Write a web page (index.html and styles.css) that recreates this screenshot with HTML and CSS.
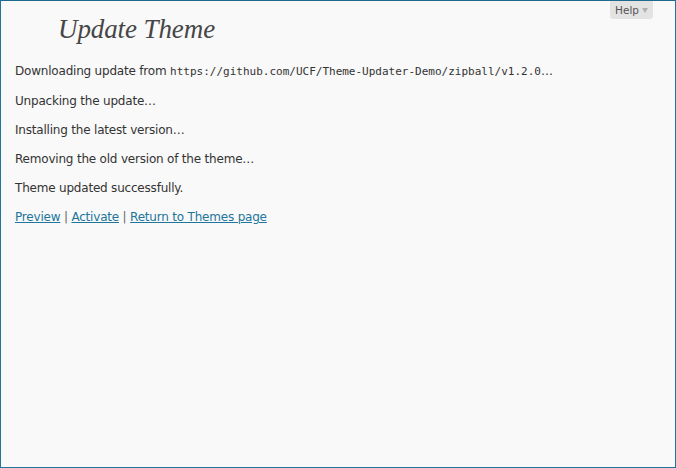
FILE: index.html
```html
<!DOCTYPE html>
<html>
<head>
<meta charset="utf-8">
<link rel="stylesheet" href="styles.css">
</head>
<body>
<div class="frame">
  <div class="help-bar"><button class="help-tab">Help <span class="arrow"></span></button></div>
  <div class="wrap">
    <h2 class="title">Update Theme</h2>
    <p>Downloading update from <code>https://github.com/UCF/Theme-Updater-Demo/zipball/v1.2.0</code>&hellip;</p>
    <p>Unpacking the update&hellip;</p>
    <p>Installing the latest version&hellip;</p>
    <p>Removing the old version of the theme&hellip;</p>
    <p>Theme updated successfully.</p>
    <p class="actions"><a href="#">Preview</a> <span class="sep">|</span> <a href="#">Activate</a> <span class="sep">|</span> <a href="#">Return to Themes page</a></p>
  </div>
</div>
</body>
</html>
```
FILE: styles.css
```css
html, body {
  margin: 0;
  padding: 0;
  height: 100%;
}
body {
  background: #f9f9f9;
  font-family: "DejaVu Sans", Verdana, sans-serif;
  font-size: 12px;
  letter-spacing: -0.2px;
  color: #333;
}
.frame {
  box-sizing: border-box;
  height: 468px;
  border: 1px solid #21759b;
  border-top-color: #1d6a8c;
  background: #f9f9f9;
  position: relative;
}
.help-bar {
  position: absolute;
  top: 0;
  right: 22px;
}
.help-tab {
  display: flex;
  align-items: center;
  gap: 3px;
  height: 18px;
  padding: 0 5px 1px 5px;
  border: none;
  border-radius: 0 0 3px 3px;
  background: #e3e3e3;
  font-family: "DejaVu Sans", sans-serif;
  font-size: 10.5px;
  letter-spacing: 0;
  color: #555;
}
.arrow {
  display: inline-block;
  width: 0;
  height: 0;
  border-left: 3.5px solid transparent;
  border-right: 3.5px solid transparent;
  border-top: 5px solid #b0b0b0;
  margin-top: 2px;
}
.wrap {
  padding: 0 14px;
}
.title {
  margin: 0;
  padding: 12px 0 0 43px;
  height: 37px;
  font-family: "Liberation Serif", "Times New Roman", serif;
  font-style: italic;
  font-weight: normal;
  font-size: 27px;
  line-height: 32px;
  letter-spacing: -0.1px;
  color: #464646;
}
p {
  margin: 13px 0;
  line-height: 16px;
}
code {
  font-family: "DejaVu Sans Mono", monospace;
  font-size: 11px;
  letter-spacing: 0;
}
a {
  color: #21759b;
}
.sep {
  color: #666;
}
```
